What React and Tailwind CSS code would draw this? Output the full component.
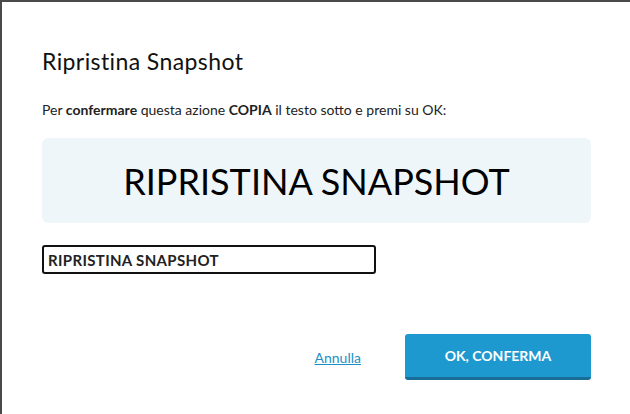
import React, { useState } from 'react';

export default function App() {
  const [value, setValue] = useState('RIPRISTINA SNAPSHOT');

  return (
    <div className="w-[630px] h-[414px] bg-[#4a4a4a] pt-[2px] pl-[2px] font-['Lato',sans-serif]">
      <div className="h-full bg-white pl-[40px] pr-[39px] flex flex-col">
        {/* Header */}
        <h2 className="mt-[44px] text-[23px] tracking-[0.4px] leading-[30px] text-[#111]">Ripristina Snapshot</h2>

        <p className="mt-[25px] text-[14px] leading-[18px] text-[#222]">
          Per <b>confermare</b> questa azione <b>COPIA</b> il testo sotto e premi su OK:
        </p>

        {/* Text to copy */}
        <div className="mt-[19px] h-[85px] rounded-md bg-[#eff6fa] flex items-center justify-center">
          <span className="text-[36px] text-black">RIPRISTINA SNAPSHOT</span>
        </div>

        <input
          type="text"
          value={value}
          onChange={(e) => setValue(e.target.value)}
          className="mt-[22px] w-[334px] h-[29px] border-2 border-[#111] rounded-[3px] px-[4px] text-[15px] tracking-[0.35px] font-bold text-[#222] outline-none"
        />

        {/* Actions */}
        <div className="mt-[60px] flex items-center justify-end gap-[44px]">
          <a href="#" className="text-[14px] text-[#1d8fc7] underline">Annulla</a>
          <button className="w-[186px] h-[46px] rounded-[3px] bg-[#1e99cf] border-b-[3px] border-[#186e96] text-white text-[14px] font-bold">
            OK, CONFERMA
          </button>
        </div>
      </div>
    </div>
  );
}
